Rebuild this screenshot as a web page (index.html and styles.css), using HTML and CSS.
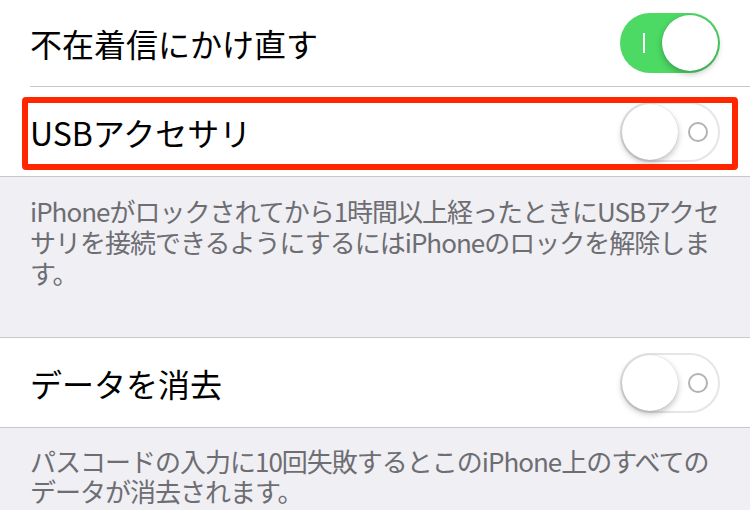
FILE: index.html
```html
<!DOCTYPE html>
<html lang="ja">
<head>
<meta charset="utf-8">
<link rel="stylesheet" href="styles.css">
</head>
<body>
<div class="group first">
  <div class="row inset">
    <span class="label">不在着信にかけ直す</span>
    <span class="switch on"><span class="mark"></span><span class="knob"></span></span>
  </div>
  <div class="row highlighted">
    <span class="label">USBアクセサリ</span>
    <span class="switch off"><span class="knob"></span><span class="ring"></span></span>
    <span class="redbox"></span>
  </div>
</div>
<p class="footer f1">iPhoneがロックされてから1時間以上経ったときにUSBアクセサリを接続できるようにするにはiPhoneのロックを解除します。</p>
<div class="group second">
  <div class="row">
    <span class="label">データを消去</span>
    <span class="switch off"><span class="knob"></span><span class="ring"></span></span>
  </div>
</div>
<p class="footer f2">パスコードの入力に10回失敗するとこのiPhone上のすべてのデータが消去されます。</p>
</body>
</html>
```
FILE: styles.css
```css
html, body {
  margin: 0;
  padding: 0;
}
body {
  background: #efeff4;
  font-family: "Noto Sans CJK JP", "Noto Sans", sans-serif;
  width: 750px;
  height: 510px;
  overflow: hidden;
}
.group {
  background: #fff;
}
.group.first {
  border-bottom: 1px solid #c8c7cc;
}
.group.second {
  border-top: 1px solid #c8c7cc;
  border-bottom: 1px solid #c8c7cc;
}
.row {
  position: relative;
  display: flex;
  align-items: center;
  justify-content: space-between;
  padding: 0 30px;
  height: 89px;
}
.row.inset {
  height: 86px;
}
.row.inset::after {
  content: "";
  position: absolute;
  left: 30px;
  right: 0;
  bottom: -1px;
  height: 1px;
  background: #c8c7cc;
}
.row.highlighted {
  margin-top: 1px;
}
.label {
  font-size: 32px;
  color: #000;
  letter-spacing: 0;
}
.switch {
  position: relative;
  display: block;
  width: 100px;
  height: 60px;
  border-radius: 30px;
  box-sizing: border-box;
  flex: none;
}
.switch.on {
  background: #4cd964;
}
.switch.off {
  background: #fff;
  border: 2px solid #e5e5ea;
}
.knob {
  position: absolute;
  width: 56px;
  height: 56px;
  border-radius: 50%;
  background: #fff;
  box-shadow: 0 3px 6px rgba(0,0,0,0.25), 0 0 1px rgba(0,0,0,0.2);
}
.switch.on .knob {
  right: 2px;
  top: 2px;
}
.switch.off .knob {
  left: 0;
  top: 0;
}
.mark {
  position: absolute;
  left: 23px;
  top: 20px;
  width: 2px;
  height: 20px;
  background: #fff;
}
.ring {
  position: absolute;
  left: 66px;
  top: 18px;
  width: 16px;
  height: 16px;
  border: 2px solid #b2b2b2;
  border-radius: 50%;
}
.redbox {
  position: absolute;
  left: 22px;
  right: 12px;
  top: 10px;
  bottom: 6px;
  border: 6px solid #ff2600;
  border-radius: 4px;
}
.footer {
  margin: 0;
  color: #6d6d72;
  font-size: 26px;
  line-height: 31px;
  padding: 18px 24px 0 30px;
  letter-spacing: -1px;
}
.footer.f1 {
  box-sizing: border-box;
  height: 160px;
}
.footer.f2 {
  line-height: 30px;
}
```
